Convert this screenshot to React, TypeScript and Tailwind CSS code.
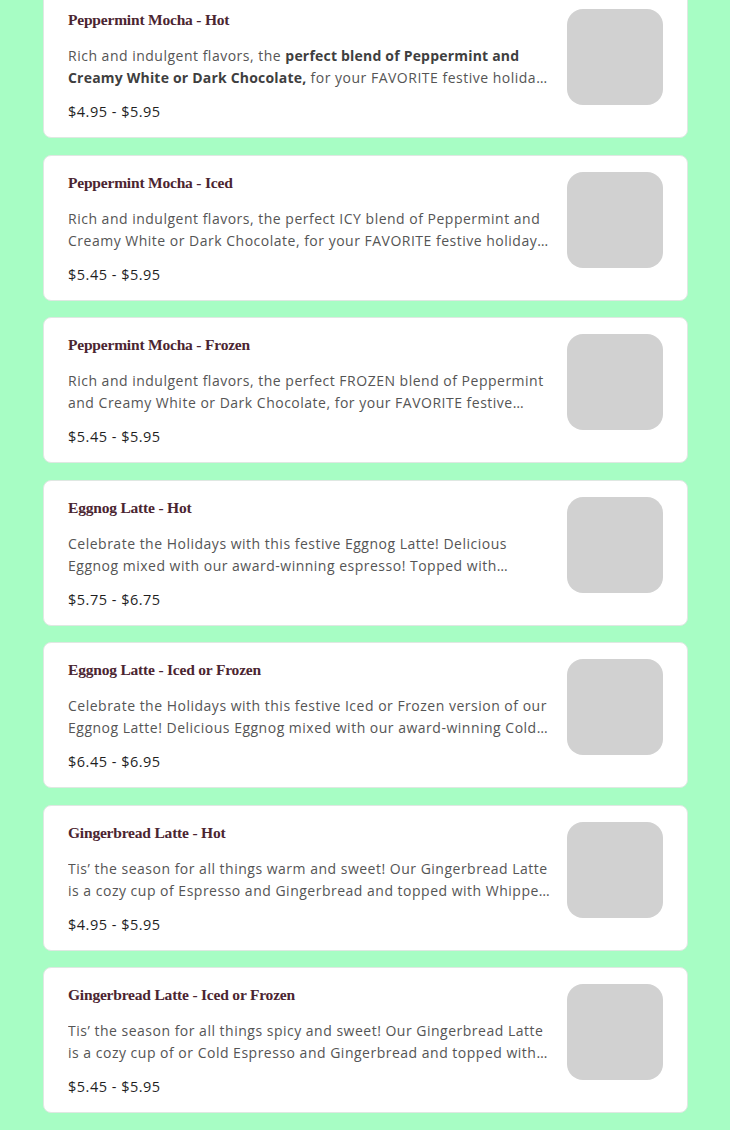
import React from 'react'

interface MenuItem {
  name: string
  desc: React.ReactNode
  price: string
}

const items: MenuItem[] = [
  {
    name: 'Peppermint Mocha - Hot',
    desc: (
      <>
        Rich and indulgent flavors, the{' '}
        <strong className="font-bold text-[#3f3f3f] tracking-[0.2px]">
          perfect blend of Peppermint and Creamy White or Dark Chocolate,
        </strong>{' '}
        for your FAVORITE festive holiday drink this season!
      </>
    ),
    price: '$4.95 - $5.95',
  },
  {
    name: 'Peppermint Mocha - Iced',
    desc: 'Rich and indulgent flavors, the perfect ICY blend of Peppermint and Creamy White or Dark Chocolate, for your FAVORITE festive holiday drink this season!',
    price: '$5.45 - $5.95',
  },
  {
    name: 'Peppermint Mocha - Frozen',
    desc: 'Rich and indulgent flavors, the perfect FROZEN blend of Peppermint and Creamy White or Dark Chocolate, for your FAVORITE festive holiday drink this season!',
    price: '$5.45 - $5.95',
  },
  {
    name: 'Eggnog Latte - Hot',
    desc: 'Celebrate the Holidays with this festive Eggnog Latte! Delicious Eggnog mixed with our award-winning espresso! Topped with whipped cream and nutmeg.',
    price: '$5.75 - $6.75',
  },
  {
    name: 'Eggnog Latte - Iced or Frozen',
    desc: 'Celebrate the Holidays with this festive Iced or Frozen version of our Eggnog Latte! Delicious Eggnog mixed with our award-winning Cold Brew! Topped with whipped cream.',
    price: '$6.45 - $6.95',
  },
  {
    name: 'Gingerbread Latte - Hot',
    desc: 'Tis\u2019 the season for all things warm and sweet! Our Gingerbread Latte is a cozy cup of Espresso and Gingerbread and topped with Whipped Cream.',
    price: '$4.95 - $5.95',
  },
  {
    name: 'Gingerbread Latte - Iced or Frozen',
    desc: 'Tis\u2019 the season for all things spicy and sweet! Our Gingerbread Latte is a cozy cup of or Cold Espresso and Gingerbread and topped with Whipped Cream.',
    price: '$5.45 - $5.95',
  },
]

function MenuCard({ item }: { item: MenuItem }) {
  return (
    <div className="flex gap-4 bg-white border border-[#dfe8e2] rounded-lg px-6 pt-4 pb-[15px]">
      <div className="flex-1 min-w-0 pt-px">
        <h3 className="font-['Liberation_Serif',serif] font-bold text-[15.5px] leading-[20px] text-[#4b2531] tracking-[-0.2px]">
          {item.name}
        </h3>
        <p className="mt-[15px] font-['Open_Sans',sans-serif] text-[14px] leading-[22px] text-[#555] line-clamp-2 tracking-[0.5px]">
          {item.desc}
        </p>
        <div className="mt-[13px] font-['Open_Sans',sans-serif] text-[14.5px] leading-[20px] text-[#1f1f1f] tracking-[0.5px]">
          {item.price}
        </div>
      </div>
      <div className="w-24 h-24 shrink-0 rounded-2xl bg-[#d1d1d1]" />
    </div>
  )
}

export default function App() {
  return (
    <div className="min-h-screen bg-[#a7fdc4] overflow-hidden">
      <div className="w-[645px] ml-[43px] -mt-[8px] flex flex-col gap-[16.5px] pb-6">
        {items.map((item) => (
          <MenuCard key={item.name} item={item} />
        ))}
      </div>
    </div>
  )
}
